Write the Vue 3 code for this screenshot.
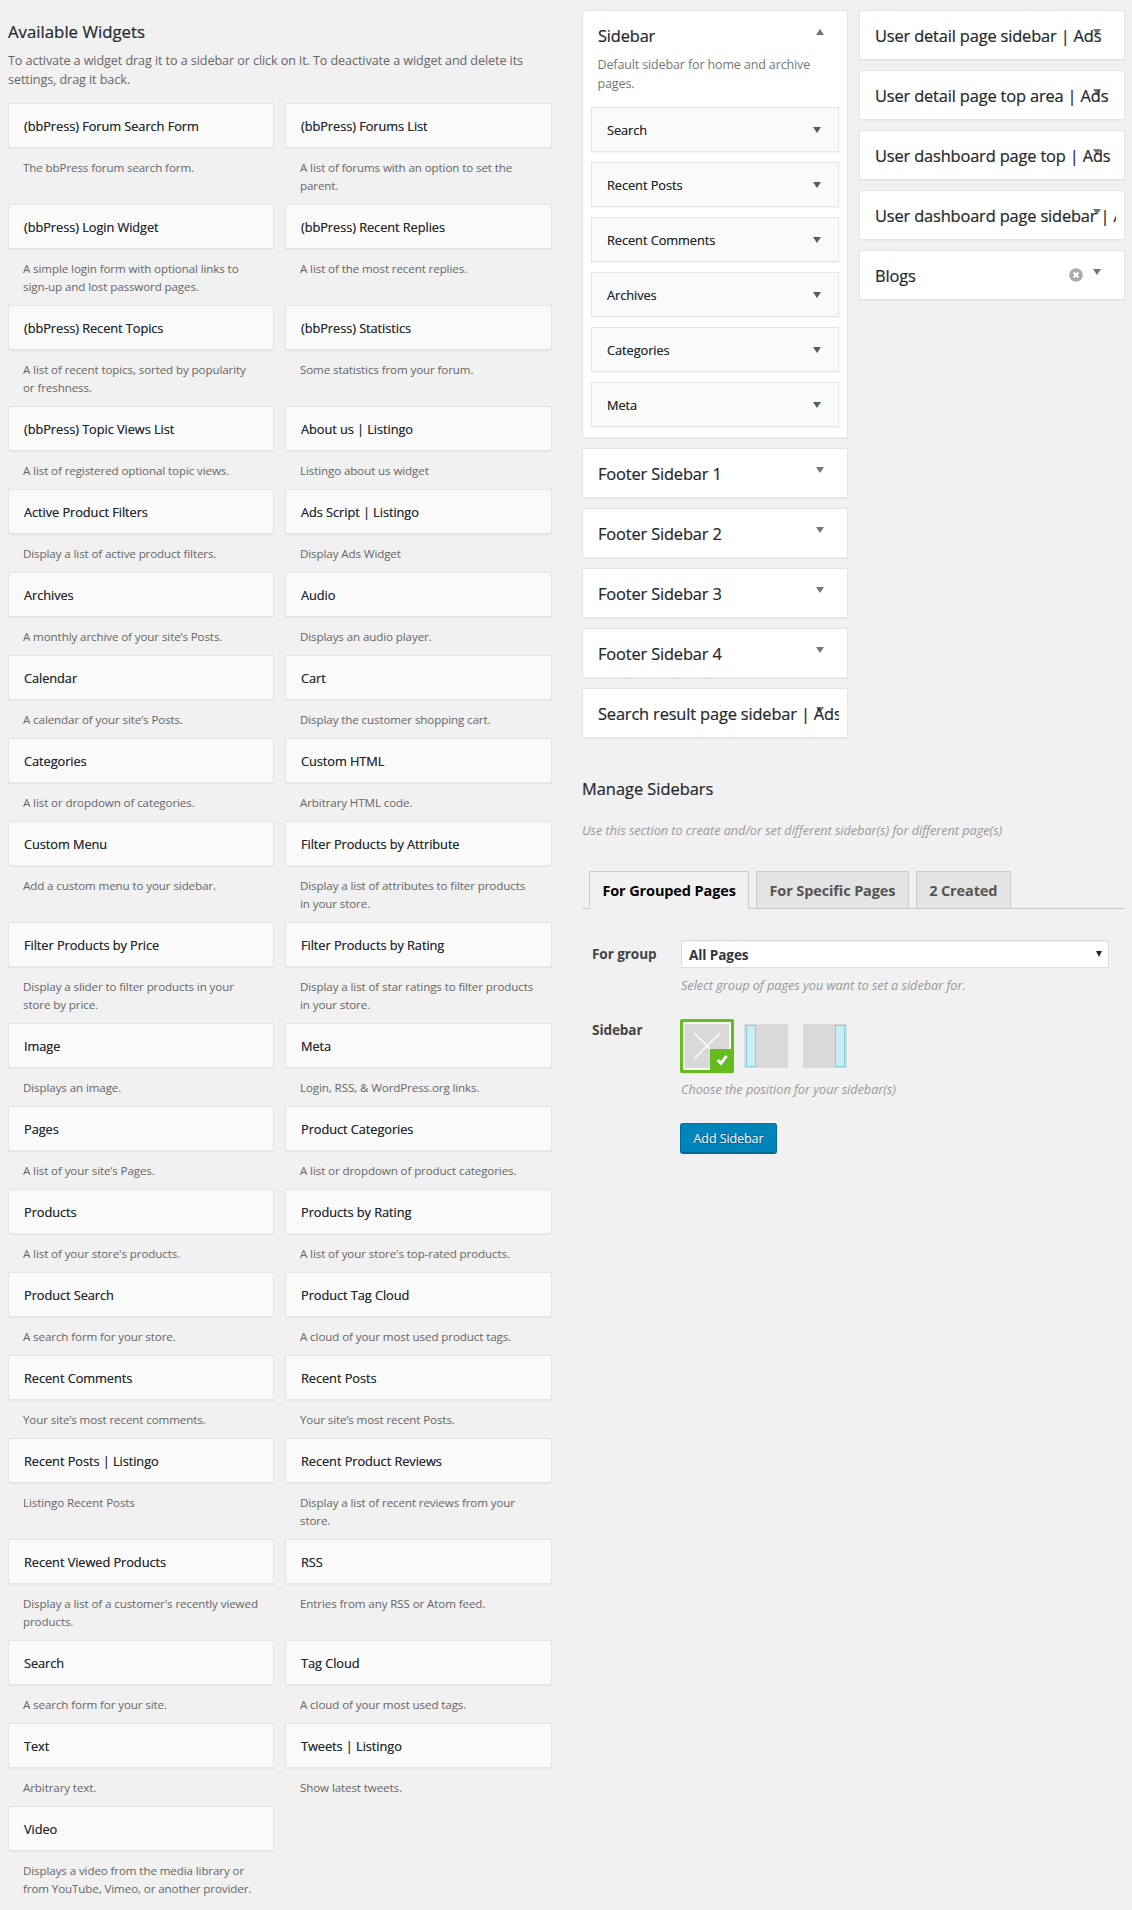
<script setup>
import { ref } from 'vue'

const available = [
  ['(bbPress) Forum Search Form', 'The bbPress forum search form.'],
  ['(bbPress) Forums List', 'A list of forums with an option to set the\nparent.'],
  ['(bbPress) Login Widget', 'A simple login form with optional links to\nsign-up and lost password pages.'],
  ['(bbPress) Recent Replies', 'A list of the most recent replies.'],
  ['(bbPress) Recent Topics', 'A list of recent topics, sorted by popularity\nor freshness.'],
  ['(bbPress) Statistics', 'Some statistics from your forum.'],
  ['(bbPress) Topic Views List', 'A list of registered optional topic views.'],
  ['About us | Listingo', 'Listingo about us widget'],
  ['Active Product Filters', 'Display a list of active product filters.'],
  ['Ads Script | Listingo', 'Display Ads Widget'],
  ['Archives', 'A monthly archive of your site’s Posts.'],
  ['Audio', 'Displays an audio player.'],
  ['Calendar', 'A calendar of your site’s Posts.'],
  ['Cart', 'Display the customer shopping cart.'],
  ['Categories', 'A list or dropdown of categories.'],
  ['Custom HTML', 'Arbitrary HTML code.'],
  ['Custom Menu', 'Add a custom menu to your sidebar.'],
  ['Filter Products by Attribute', 'Display a list of attributes to filter products\nin your store.'],
  ['Filter Products by Price', 'Display a slider to filter products in your\nstore by price.'],
  ['Filter Products by Rating', 'Display a list of star ratings to filter products\nin your store.'],
  ['Image', 'Displays an image.'],
  ['Meta', 'Login, RSS, & WordPress.org links.'],
  ['Pages', 'A list of your site’s Pages.'],
  ['Product Categories', 'A list or dropdown of product categories.'],
  ['Products', "A list of your store's products."],
  ['Products by Rating', "A list of your store's top-rated products."],
  ['Product Search', 'A search form for your store.'],
  ['Product Tag Cloud', 'A cloud of your most used product tags.'],
  ['Recent Comments', 'Your site’s most recent comments.'],
  ['Recent Posts', 'Your site’s most recent Posts.'],
  ['Recent Posts | Listingo', 'Listingo Recent Posts'],
  ['Recent Product Reviews', 'Display a list of recent reviews from your\nstore.'],
  ['Recent Viewed Products', "Display a list of a customer's recently viewed\nproducts."],
  ['RSS', 'Entries from any RSS or Atom feed.'],
  ['Search', 'A search form for your site.'],
  ['Tag Cloud', 'A cloud of your most used tags.'],
  ['Text', 'Arbitrary text.'],
  ['Tweets | Listingo', 'Show latest tweets.'],
  ['Video', 'Displays a video from the media library or\nfrom YouTube, Vimeo, or another provider.'],
]

const active = ['Search', 'Recent Posts', 'Recent Comments', 'Archives', 'Categories', 'Meta']
const footers = [
  'Footer Sidebar 1',
  'Footer Sidebar 2',
  'Footer Sidebar 3',
  'Footer Sidebar 4',
  'Search result page sidebar | Ads',
]
const userAreas = [
  'User detail page sidebar | Ads',
  'User detail page top area | Ads',
  'User dashboard page top | Ads',
  'User dashboard page sidebar | Ads',
  'Blogs',
]
const tabs = ['For Grouped Pages', 'For Specific Pages', '2 Created']
const tab = ref(0)
</script>

<template>
  <div class="page">
    <section class="available">
      <h2 class="heading">Available Widgets</h2>
      <p class="intro">To activate a widget drag it to a sidebar or click on it. To deactivate a widget and delete its<br>settings, drag it back.</p>
      <div class="widgets">
        <div v-for="[name, text] in available" :key="name" class="widget">
          <h3 class="card">{{ name }}</h3>
          <p class="about">{{ text }}</p>
        </div>
      </div>
    </section>

    <section class="right">
      <div class="columns">
        <div class="column">
          <div class="area open">
            <svg class="toggle" viewBox="0 0 8 6"><path d="M0 6L4 0L8 6Z" /></svg>
            <h2 class="title">Sidebar</h2>
            <p class="area-text">Default sidebar for home and archive<br>pages.</p>
            <div class="stack">
              <h3 v-for="name in active" :key="name" class="card">
                {{ name }}
                <svg class="caret" viewBox="0 0 8 6"><path d="M0 0H8L4 6Z" /></svg>
              </h3>
            </div>
          </div>
          <div v-for="name in footers" :key="name" class="area">
            <svg class="toggle" viewBox="0 0 8 6"><path d="M0 0H8L4 6Z" /></svg>
            <h2 class="title">{{ name }}</h2>
          </div>
        </div>
        <div class="column">
          <div v-for="name in userAreas" :key="name" class="area">
            <svg class="toggle" viewBox="0 0 8 6"><path d="M0 0H8L4 6Z" /></svg>
            <svg v-if="name === 'Blogs'" class="remove" viewBox="0 0 14 14">
              <circle cx="7" cy="7" r="6.8" fill="#aaa" />
              <path d="M4.5 4.5L9.5 9.5M9.5 4.5L4.5 9.5" stroke="#fff" stroke-width="2.2" />
            </svg>
            <h2 class="title">{{ name }}</h2>
          </div>
        </div>
      </div>

      <h2 class="heading manage">Manage Sidebars</h2>
      <p class="hint lead">Use this section to create and/or set different sidebar(s) for different page(s)</p>
      <div class="tabs">
        <button v-for="(name, i) in tabs" :key="name" class="tab" :class="{ on: tab === i }" @click="tab = i">{{ name }}</button>
      </div>

      <div class="form">
        <div class="label">For group</div>
        <div class="field">
          <div class="select">
            <span>All Pages</span>
            <svg width="6" height="6" viewBox="0 0 6 6"><path d="M0 0H6L3 6Z" fill="#23282d" /></svg>
          </div>
          <p class="hint">Select group of pages you want to set a sidebar for.</p>
        </div>
        <div class="label">Sidebar</div>
        <div class="field">
          <div class="layouts">
            <svg width="54" height="54" viewBox="0 0 54 54">
              <rect width="54" height="54" rx="2" fill="#65bc1f" />
              <rect x="3" y="3" width="48" height="48" fill="#f7f7f7" />
              <rect x="5" y="5" width="44" height="44" fill="#d9d9d9" />
              <path d="M14 14L40 40M40 14L14 40" stroke="#fff" stroke-width="1.3" />
              <path d="M30 30H54V52a2 2 0 0 1-2 2H30Z" fill="#65bc1f" />
              <path d="M37.6 41L41 44.3L46.6 36.8" fill="none" stroke="#fff" stroke-width="3" />
            </svg>
            <svg width="44" height="44" viewBox="0 0 44 44">
              <rect width="44" height="44" fill="#d9d9d9" />
              <rect x="2.5" y="1.5" width="9" height="41" fill="#c9eef5" stroke="#7fcfe0" />
            </svg>
            <svg width="44" height="44" viewBox="0 0 44 44">
              <rect width="44" height="44" fill="#d9d9d9" />
              <rect x="32.5" y="1.5" width="9" height="41" fill="#c9eef5" stroke="#7fcfe0" />
            </svg>
          </div>
          <p class="hint">Choose the position for your sidebar(s)</p>
          <button class="primary">Add Sidebar</button>
        </div>
      </div>
    </section>
  </div>
</template>

<style>
body {
  background: #f1f1f1;
}
</style>

<style scoped>
.page {
  box-sizing: border-box;
  width: 1132px;
  height: 1910px;
  overflow: hidden;
  padding-left: 8px;
  display: flex;
  align-items: flex-start;
  background: #f1f1f1;
  font-family: "Open Sans", "Noto Sans", sans-serif;
  color: #23282d;
}
h2,
h3,
p {
  margin: 0;
  white-space: nowrap;
}
.available {
  width: 544px;
  padding-top: 20px;
}
.heading {
  font-size: 16.8px;
  line-height: 24px;
  font-weight: 500;
  -webkit-text-stroke: 0.2px currentColor;
}
.intro {
  margin-top: 7px;
  font-size: 12.6px;
  letter-spacing: -0.085px;
  line-height: 19px;
  color: #666;
}
.widgets {
  margin-top: 14px;
  display: grid;
  grid-template-columns: 266px 267px;
  column-gap: 11px;
}
.card {
  box-sizing: border-box;
  height: 45px;
  padding: 1px 15px 0;
  display: flex;
  align-items: center;
  justify-content: space-between;
  background: #fafafa;
  border: 1px solid #e5e5e5;
  box-shadow: 0 1px 1px rgba(0, 0, 0, 0.04);
  font-size: 12.8px;
  letter-spacing: -0.07px;
  font-weight: 500;
  text-shadow: 0 0 0.6px rgba(35, 40, 45, 0.6);
}
.about {
  padding: 11px 0 9px 15px;
  font-size: 11.6px;
  letter-spacing: -0.11px;
  line-height: 18px;
  white-space: pre;
  color: #666;
}
.right {
  margin-left: 30px;
  width: 543px;
  padding-top: 10px;
}
.columns {
  display: grid;
  grid-template-columns: 266px 266px;
  column-gap: 11px;
  align-items: start;
}
.column {
  display: grid;
  grid-template-columns: minmax(0, 1fr);
  row-gap: 10px;
}
.area {
  position: relative;
  box-sizing: border-box;
  height: 50px;
  padding: 0 8px;
  background: #fff;
  border: 1px solid #e5e5e5;
  box-shadow: 0 1px 1px rgba(0, 0, 0, 0.04);
}
.area.open {
  height: 428px;
}
.title {
  position: relative;
  padding-left: 7px;
  overflow: hidden;
  font-size: 16.4px;
  letter-spacing: -0.15px;
  line-height: 50px;
  height: 48px;
  font-weight: 500;
  -webkit-text-stroke: 0.2px currentColor;
}
.toggle {
  position: absolute;
  top: 18px;
  right: 23px;
  width: 8px;
  height: 6px;
  fill: #72777c;
}
.remove {
  position: absolute;
  top: 17px;
  right: 41px;
  width: 14px;
  height: 14px;
}
.area-text {
  margin-top: -4px;
  padding-left: 6.5px;
  font-size: 12.5px;
  letter-spacing: -0.13px;
  line-height: 19px;
  color: #72777c;
}
.stack {
  margin-top: 14px;
  display: grid;
  row-gap: 10px;
}
.stack .card {
  padding-right: 17px;
}
.caret {
  width: 8px;
  height: 6px;
  fill: #555d66;
}
.manage {
  margin-top: 39px;
  font-size: 16.4px;
}
.hint {
  font-size: 12.7px;
  letter-spacing: -0.03px;
  line-height: 20px;
  font-style: italic;
  color: #999;
}
.lead {
  margin-top: 19px;
}
.tabs {
  margin-top: 31px;
  padding-left: 7px;
  display: flex;
  column-gap: 7px;
  border-bottom: 1px solid #ccc;
}
.tab {
  box-sizing: border-box;
  height: 37px;
  padding: 1px 12.4px 0;
  border: 1px solid #ccc;
  border-bottom: 0;
  background: #e4e4e4;
  color: #555;
  font: 700 14.5px/35px "Open Sans", "Noto Sans", sans-serif;
  letter-spacing: -0.12px;
}
.tab.on {
  height: 38px;
  margin-bottom: -1px;
  padding-bottom: 1px;
  background: #f1f1f1;
  color: #000;
}
.form {
  margin-top: 31px;
  padding-left: 10px;
  display: grid;
  grid-template-columns: 88px 430px;
}
.label {
  padding-top: 4px;
  font-size: 13.6px;
  letter-spacing: -0.1px;
  line-height: 20px;
  font-weight: 700;
  color: #444;
}
.label:nth-of-type(3) {
  padding-top: 1px;
}
.select {
  box-sizing: border-box;
  height: 28px;
  margin: 0 1px;
  padding: 0 6px 0 7px;
  display: flex;
  align-items: center;
  justify-content: space-between;
  background: #fff;
  border: 1px solid #ddd;
  box-shadow: inset 0 1px 2px rgba(0, 0, 0, 0.07);
  font-size: 13.6px;
  letter-spacing: -0.1px;
  font-weight: 700;
  color: #32373c;
}
.select span {
  padding-top: 1px;
}
.field .hint {
  padding-left: 1px;
}
.select + .hint {
  margin: 7px 0 24px;
}
.layouts {
  display: flex;
  align-items: center;
}
.layouts svg:nth-child(2) {
  margin: 0 15px 0 10px;
}
.layouts + .hint {
  margin-top: 6px;
}
.primary {
  display: block;
  width: 97px;
  height: 30px;
  margin-top: 24px;
  padding: 1px 0 0;
  border: 1px solid;
  border-color: #0073aa #006799 #006799;
  border-radius: 3px;
  background: #0085ba;
  box-shadow: 0 1px 0 #006799;
  color: #fff;
  font: 400 12.6px/27px "Open Sans", "Noto Sans", sans-serif;
  letter-spacing: -0.13px;
  text-shadow: 0 -1px 1px #006799, 1px 0 1px #006799, 0 1px 1px #006799;
}
</style>
